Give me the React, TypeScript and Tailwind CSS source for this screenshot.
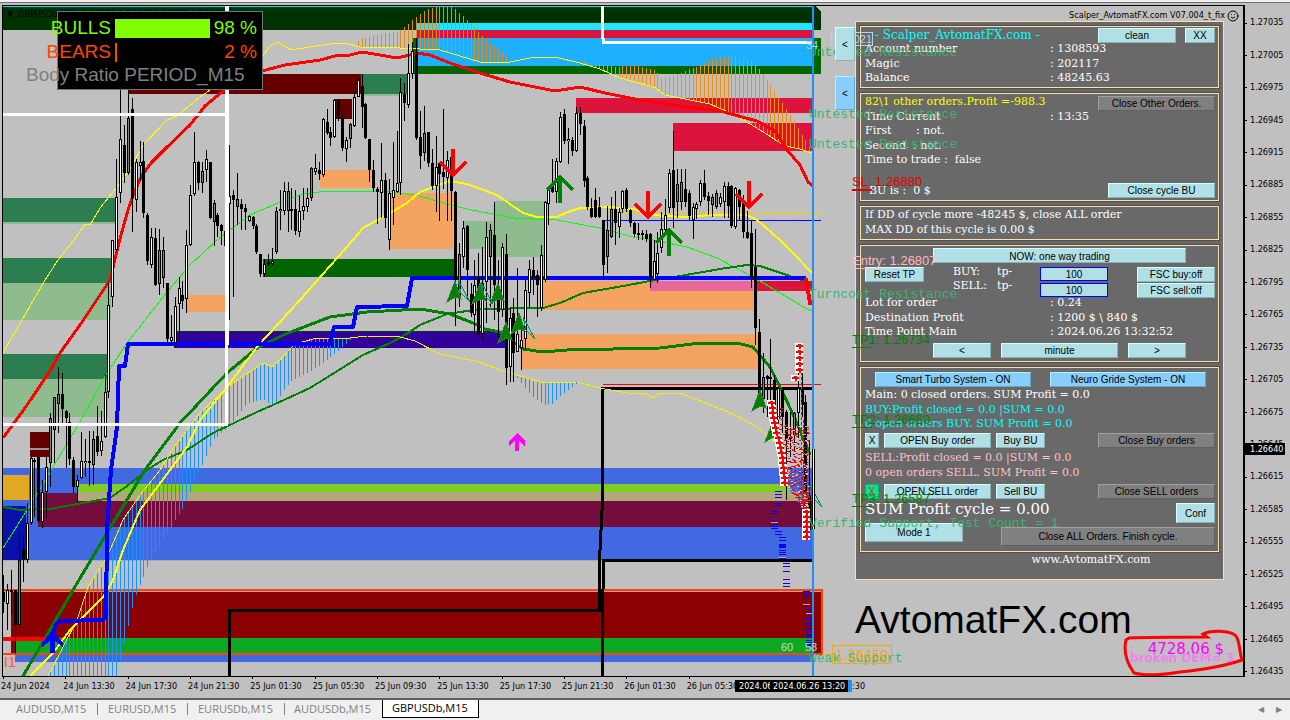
import type { ReactNode } from 'react'
import clsx from 'clsx'
import { Smile } from 'lucide-react'

type Point = [number, number]
type Zone = [x1: number, y1: number, x2: number, y2: number, fill: string]
type Candle = [high: number, low: number, top: number, bottom: number, kind: string]

const PRICES = Array.from({ length: 21 }, (_, i) => (1.27035 - i * 0.0003).toFixed(5))

const TIMES = [
  '24 Jun 2024', '24 Jun 13:30', '24 Jun 17:30', '24 Jun 21:30', '25 Jun 01:30', '25 Jun 05:30',
  '25 Jun 09:30', '25 Jun 13:30', '25 Jun 17:30', '25 Jun 21:30', '26 Jun 01:30', '26 Jun 05:30',
]

const TABS = ['AUDUSD,M15', 'EURUSD,M15', 'EURUSDb,M15', 'AUDUSDb,M15', 'GBPUSDb,M15']

const ZONES: Zone[] = [
  [3, 6, 821, 30, '#003200'],
  [416, 23, 812, 30, '#1ee6ff'],
  [416, 30, 812, 38, '#dc143c'],
  [413, 38, 821, 74, '#006400'],
  [418, 38, 812, 66, '#1eb0ff'],
  [129, 74, 361, 94, '#640000'],
  [361, 74, 407, 96, '#8fbc8f'],
  [361, 74, 407, 94, '#2c7d50'],
  [335, 99, 352, 119, '#640000'],
  [320, 170, 371, 188, '#f4a460'],
  [390, 193, 453, 249, '#f4a460'],
  [187, 295, 229, 312, '#f4a460'],
  [542, 281, 754, 310, '#f4a460'],
  [522, 334, 758, 369, '#f4a460'],
  [3, 198, 116, 224, '#8fbc8f'],
  [3, 198, 116, 222, '#2c7d50'],
  [3, 258, 111, 283, '#2c7d50'],
  [3, 283, 111, 320, '#8fbc8f'],
  [3, 354, 108, 379, '#2c7d50'],
  [3, 379, 108, 417, '#8fbc8f'],
  [263, 259, 455, 277, '#006400'],
  [463, 221, 494, 249, '#8fbc8f'],
  [494, 201, 547, 257, '#8fbc8f'],
  [174, 331, 505, 348, '#32009b'],
  [174, 331, 505, 332, '#004000'],
  [576, 98, 812, 113, '#dc143c'],
  [673, 123, 812, 151, '#dc143c'],
  [650, 281, 753, 291, '#e9679b'],
  [757, 281, 812, 291, '#dc143c'],
  [3, 468, 812, 560, '#4169e1'],
  [78, 484, 790, 492, '#82cd22'],
  [78, 492, 798, 501, '#b3a77f'],
  [38, 501, 812, 527, '#740d3d'],
  [38, 493, 78, 501, '#740d3d'],
  [3, 475, 29, 500, '#e1a823'],
  [3, 506, 26, 560, '#0a10aa'],
  [30, 432, 49, 457, '#640000'],
  [30, 448, 49, 450, '#969696'],
  [11, 592, 821, 654, '#8b0000'],
  [15, 638, 812, 654, '#0ca820'],
  [15, 655, 812, 662, '#4169e1'],
]

const YELLOW_TOP: Point[] = [
  [3, 353], [22, 320], [45, 280], [58, 260], [74, 240], [85, 224], [90, 225], [100, 208], [117, 187],
  [132, 166], [143, 145], [167, 120], [177, 116], [200, 97], [213, 88], [262, 57], [270, 46], [278, 42],
  [291, 50], [310, 47], [330, 44], [345, 43], [360, 47], [400, 48], [440, 50], [450, 53], [480, 62],
  [510, 62], [530, 58], [555, 57], [580, 63], [600, 69], [620, 78], [650, 86], [656, 88], [665, 95],
  [680, 98], [710, 104], [735, 115], [760, 130], [785, 146], [800, 149], [812, 153],
]

const YELLOW_LOW: Point[] = [
  [48, 676], [77, 620], [88, 587], [107, 557], [123, 520], [140, 495], [160, 470], [177, 443], [200, 413],
  [230, 385], [263, 363], [273, 367], [293, 346], [302, 342], [317, 338], [350, 338], [367, 336],
  [400, 337], [415, 341], [440, 354], [480, 362], [500, 370], [527, 378], [543, 383], [577, 382],
  [600, 388], [627, 393], [645, 393], [653, 398], [660, 393], [680, 393], [703, 402], [733, 414],
  [757, 427], [775, 442],
]

const YELLOW_MA: Point[] = [
  [30, 676], [53, 653], [70, 630], [103, 597], [113, 580], [123, 550], [140, 510], [170, 470], [187, 447],
  [200, 420], [227, 387], [257, 347], [300, 300], [353, 240], [363, 228], [390, 213], [407, 203],
  [420, 192], [433, 187], [450, 181], [467, 184], [497, 195], [523, 213], [537, 217], [557, 217],
  [568, 212], [580, 208], [610, 207], [633, 209], [653, 215], [680, 217], [713, 215], [747, 215],
  [757, 220], [780, 240], [793, 253], [812, 273],
]

const LIME_MA: Point[] = [
  [3, 548], [27, 510], [50, 472], [80, 422], [107, 373], [127, 343], [167, 292], [190, 265], [217, 240],
  [250, 215], [280, 202], [303, 194], [327, 191], [387, 191], [420, 196], [433, 200], [467, 209],
  [513, 218], [557, 220], [600, 228], [633, 237], [653, 240], [687, 247], [717, 258], [753, 277],
  [780, 293], [807, 309], [812, 311],
]

const GREEN_MA: Point[] = [
  [23, 676], [73, 590], [113, 523], [145, 470], [180, 423], [227, 373], [257, 348], [283, 335],
  [330, 317], [367, 312], [420, 309], [450, 314], [473, 323], [485, 329], [500, 332], [523, 349],
  [543, 352], [567, 350], [660, 348], [700, 343], [737, 343], [753, 347], [770, 367], [783, 393],
  [797, 423], [810, 455],
]

const GREEN_SLOW: Point[] = [
  [3, 507], [20, 510], [50, 509], [77, 504], [110, 498], [127, 486], [147, 470], [163, 460], [187, 450],
  [213, 433], [257, 412], [273, 405], [310, 388], [363, 355], [390, 343], [405, 335], [420, 325],
  [447, 314], [480, 309], [543, 308], [560, 303], [583, 293], [623, 286], [650, 281], [680, 276],
  [720, 269], [747, 265], [760, 266], [787, 275], [807, 282], [812, 285],
]

const RED_MA: Point[] = [
  [3, 438], [25, 408], [50, 371], [60, 353], [80, 325], [110, 280], [116, 255], [121, 235], [128, 210],
  [134, 193], [142, 175], [152, 162], [165, 149], [190, 125], [205, 106], [222, 92], [262, 71],
  [285, 65], [320, 60], [335, 56], [350, 55], [362, 52], [380, 55], [397, 58], [410, 55], [417, 53],
  [430, 55], [450, 63], [480, 73], [510, 82], [540, 88], [555, 91], [580, 87], [605, 93], [640, 100],
  [680, 106], [720, 111], [757, 121], [775, 131], [787, 150], [800, 165], [808, 182], [813, 186],
]

const BLUE_STEP: Point[] = [
  [53, 640], [55, 625], [59, 621], [103, 620], [106, 616], [107, 530], [111, 470], [117, 427],
  [119, 366], [125, 366], [128, 344], [330, 344], [334, 327], [353, 327], [357, 307], [407, 306],
  [412, 278], [806, 278],
]

// one entry per M15 bar: w = bullish, b = bearish, g = muted
const CANDLES: Candle[] = [
  [575, 613, 592, 602, 'b'], [584, 630, 590, 604, 'w'], [570, 615, 590, 592, 'b'], [590, 654, 590, 625, 'b'],
  [535, 632, 560, 625, 'g'], [537, 582, 550, 559, 'b'], [503, 563, 523, 560, 'w'], [457, 525, 458, 523, 'w'],
  [458, 517, 460, 462, 'b'], [457, 523, 457, 521, 'b'], [480, 528, 492, 522, 'w'], [457, 518, 467, 492, 'w'],
  [413, 487, 418, 463, 'g'], [397, 463, 397, 430, 'g'], [367, 433, 394, 404, 'g'], [373, 423, 394, 409, 'b'],
  [410, 468, 411, 418, 'b'], [413, 465, 422, 459, 'b'], [457, 493, 460, 487, 'b'], [475, 502, 480, 487, 'w'],
  [432, 479, 461, 478, 'w'], [439, 477, 461, 463, 'w'], [431, 486, 461, 463, 'b'], [431, 485, 439, 465, 'g'],
  [406, 456, 436, 452, 'b'], [411, 456, 441, 451, 'w'], [374, 438, 392, 437, 'w'], [283, 398, 305, 392, 'w'],
  [240, 307, 240, 297, 'w'], [159, 251, 197, 250, 'w'], [90, 203, 139, 193, 'w'], [125, 183, 145, 173, 'b'],
  [90, 175, 118, 173, 'g'], [98, 232, 109, 198, 'b'], [159, 212, 162, 200, 'w'], [141, 180, 162, 166, 'w'],
  [142, 218, 161, 213, 'b'], [213, 265, 215, 261, 'b'], [228, 268, 237, 265, 'w'], [228, 286, 238, 285, 'b'],
  [229, 295, 250, 284, 'g'], [237, 288, 250, 278, 'g'], [283, 346, 283, 339, 'b'], [315, 345, 337, 341, 'w'],
  [297, 348, 306, 343, 'w'], [277, 340, 288, 304, 'w'], [281, 309, 295, 301, 'b'], [230, 313, 245, 299, 'w'],
  [185, 246, 195, 245, 'w'], [132, 196, 162, 194, 'w'], [161, 190, 162, 183, 'b'], [162, 193, 171, 183, 'g'],
  [150, 182, 159, 170, 'w'], [162, 219, 162, 218, 'b'], [200, 246, 203, 222, 'g'], [213, 237, 215, 226, 'b'],
  [224, 245, 225, 231, 'b'], [222, 247, 231, 246, 'b'], [145, 320, 196, 204, 'w'], [190, 297, 195, 200, 'b'],
  [173, 225, 199, 207, 'g'], [199, 230, 204, 209, 'b'], [204, 230, 208, 212, 'b'], [215, 222, 216, 221, 'w'],
  [216, 229, 217, 226, 'b'], [224, 254, 226, 252, 'b'], [254, 277, 254, 274, 'b'], [259, 277, 264, 274, 'w'],
  [254, 266, 262, 265, 'b'], [248, 265, 261, 264, 'w'], [207, 254, 211, 252, 'g'], [190, 230, 209, 211, 'g'],
  [182, 215, 191, 211, 'w'], [182, 232, 191, 211, 'g'], [188, 230, 209, 211, 'b'], [190, 235, 209, 231, 'b'],
  [195, 237, 211, 232, 'w'], [188, 220, 206, 211, 'w'], [188, 212, 198, 207, 'w'], [167, 201, 168, 198, 'g'],
  [154, 175, 168, 172, 'w'], [162, 180, 170, 174, 'b'], [118, 177, 119, 175, 'w'], [109, 135, 122, 133, 'b'],
  [127, 146, 132, 138, 'b'], [99, 138, 100, 137, 'w'], [99, 121, 100, 115, 'b'], [114, 151, 118, 148, 'b'],
  [137, 162, 140, 149, 'w'], [123, 148, 124, 139, 'g'], [92, 127, 97, 126, 'w'], [78, 97, 80, 97, 'w'],
  [74, 128, 86, 107, 'b'], [103, 139, 104, 138, 'b'], [139, 182, 139, 170, 'b'], [160, 192, 170, 188, 'b'],
  [187, 224, 189, 192, 'b'], [143, 218, 180, 193, 'w'], [173, 228, 180, 218, 'b'], [179, 250, 193, 240, 'w'],
  [142, 225, 190, 198, 'w'], [131, 193, 183, 192, 'w'], [78, 195, 92, 183, 'w'], [83, 121, 94, 103, 'b'],
  [44, 108, 73, 105, 'w'], [42, 79, 51, 74, 'w'], [38, 140, 52, 138, 'b'], [111, 169, 137, 156, 'b'],
  [106, 161, 133, 153, 'g'], [132, 167, 132, 163, 'b'], [149, 190, 163, 186, 'b'], [136, 212, 167, 186, 'w'],
  [162, 221, 163, 174, 'b'], [109, 189, 172, 177, 'b'], [151, 221, 160, 178, 'w'], [149, 221, 157, 191, 'b'],
  [191, 326, 192, 280, 'b'], [243, 307, 254, 296, 'g'], [221, 268, 228, 257, 'w'], [225, 300, 226, 270, 'b'],
  [283, 317, 294, 313, 'b'], [260, 333, 285, 315, 'w'], [253, 335, 278, 334, 'b'], [247, 339, 283, 334, 'w'],
  [222, 323, 237, 282, 'w'], [224, 307, 230, 257, 'g'], [202, 320, 235, 285, 'b'], [260, 337, 293, 312, 'b'],
  [243, 317, 247, 310, 'w'], [234, 385, 254, 368, 'b'], [307, 382, 318, 367, 'w'], [298, 382, 313, 353, 'b'],
  [268, 350, 334, 352, 'w'], [323, 370, 340, 348, 'w'], [277, 350, 290, 339, 'w'], [260, 307, 269, 293, 'w'],
  [257, 295, 270, 278, 'b'], [270, 317, 275, 285, 'b'], [245, 311, 255, 308, 'w'], [201, 282, 202, 280, 'w'],
  [188, 225, 188, 204, 'w'], [159, 193, 186, 192, 'b'], [158, 203, 161, 192, 'w'], [112, 163, 117, 162, 'w'],
  [109, 144, 114, 141, 'b'], [128, 164, 139, 141, 'w'], [137, 156, 140, 151, 'b'], [107, 152, 113, 151, 'w'],
  [107, 135, 113, 124, 'b'], [120, 187, 126, 181, 'b'], [176, 210, 178, 207, 'b'], [198, 218, 208, 217, 'b'],
  [188, 218, 200, 217, 'b'], [197, 218, 207, 217, 'b'], [220, 277, 220, 265, 'b'], [206, 273, 230, 257, 'g'],
  [197, 238, 209, 237, 'g'], [191, 245, 209, 223, 'b'], [208, 238, 212, 227, 'w'], [190, 213, 191, 209, 'w'],
  [188, 212, 190, 209, 'b'], [209, 227, 210, 223, 'b'], [222, 237, 223, 234, 'b'], [223, 240, 233, 235, 'b'],
  [230, 240, 233, 235, 'b'], [230, 242, 234, 239, 'b'], [233, 288, 234, 278, 'b'], [240, 280, 261, 280, 'w'],
  [232, 283, 253, 274, 'w'], [212, 253, 229, 248, 'w'], [199, 235, 215, 230, 'w'], [169, 213, 173, 208, 'w'],
  [131, 228, 170, 208, 'b'], [169, 218, 184, 202, 'g'], [169, 210, 182, 202, 'g'], [169, 207, 189, 202, 'b'],
  [190, 220, 193, 216, 'b'], [203, 239, 207, 220, 'w'], [202, 219, 204, 209, 'w'], [180, 206, 183, 202, 'w'],
  [170, 200, 183, 197, 'b'], [192, 215, 196, 201, 'b'], [194, 217, 197, 205, 'g'], [190, 209, 193, 207, 'g'],
  [193, 207, 197, 204, 'w'], [182, 218, 186, 202, 'w'], [182, 218, 186, 206, 'b'], [185, 228, 186, 226, 'b'],
  [187, 229, 188, 227, 'w'], [189, 220, 190, 207, 'b'], [195, 238, 200, 232, 'b'], [211, 239, 232, 238, 'b'],
  [220, 288, 233, 278, 'b'], [229, 345, 267, 328, 'b'], [319, 402, 332, 402, 'b'], [353, 413, 377, 399, 'g'],
  [375, 417, 376, 379, 'b'], [339, 410, 377, 379, 'b'], [375, 430, 380, 418, 'b'], [387, 423, 388, 420, 'w'],
  [387, 433, 390, 417, 'b'], [410, 500, 412, 440, 'b'], [412, 457, 437, 439, 'b'], [412, 452, 413, 435, 'g'],
  [350, 438, 388, 413, 'w'], [345, 417, 388, 405, 'b'], [395, 495, 402, 495, 'b'], [440, 540, 495, 530, 'b'],
  [448, 530, 449, 529, 'w'],
]

const CANDLE_FILL: Record<string, string> = { w: '#ffffff', b: '#000000', g: '#808080' }

const ORANGE_A: Point[] = [
  [357, 41], [372, 36], [383, 33], [398, 32], [410, 22], [425, 10], [440, 6], [453, 7], [467, 20],
  [483, 37], [498, 49], [511, 62],
]
const ORANGE_B: Point[] = [
  [583, 62], [600, 64], [615, 67], [635, 65], [655, 70], [661, 78], [680, 73], [700, 65], [715, 58],
  [735, 56], [752, 60], [765, 77], [780, 100], [795, 123], [805, 140], [812, 152],
]
const BLUE_A: Point[] = [
  [50, 676], [116, 676], [125, 640], [133, 603], [147, 567], [167, 533], [183, 507], [200, 470],
  [213, 440], [227, 428], [247, 403], [263, 399], [273, 406], [290, 382], [307, 373], [320, 365],
  [333, 355], [350, 340],
]
const BLUE_B: Point[] = [[517, 378], [530, 394], [543, 405], [552, 404], [562, 394], [577, 383]]

const barX = (i: number) => Math.round(3.3 + i * 3.894)

const yAt = (pts: Point[], x: number) => {
  const i = pts.findIndex(p => p[0] >= x)
  if (i <= 0) return pts[Math.max(i, 0)][1]
  const [x0, y0] = pts[i - 1]
  const [x1, y1] = pts[i]
  return y0 + ((y1 - y0) * (x - x0)) / (x1 - x0)
}

const toPoints = (pts: Point[]) => pts.map(p => p.join(',')).join(' ')

function Curve({ pts, color, width = 1 }: { pts: Point[]; color: string; width?: number }) {
  return <polyline points={toPoints(pts)} fill="none" stroke={color} strokeWidth={width} strokeLinejoin="round" />
}

function Histogram({ edge, base, color }: { edge: Point[]; base: Point[]; color: string }) {
  const from = edge[0][0]
  const to = edge[edge.length - 1][0]
  const xs = CANDLES.map((_, i) => barX(i)).filter(x => x >= from && x <= to)
  return (
    <g stroke={color}>
      {xs.map(x => (
        <line key={x} x1={x + 0.5} x2={x + 0.5} y1={yAt(edge, x)} y2={yAt(base, x)} />
      ))}
    </g>
  )
}

function ChevronArrow({ x, y, up, color }: { x: number; y: number; up?: boolean; color: string }) {
  const d = up ? 'M0 0V27M-13 14L0 1L13 14' : 'M0 0V27M-13 13L0 26L13 13'
  return <path d={d} transform={`translate(${x} ${y})`} stroke={color} strokeWidth="4" fill="none" />
}

function Kite({ x, y, flip }: { x: number; y: number; flip?: boolean }) {
  return (
    <path
      d={flip ? 'M-4 -12L8 10L-1 1Z' : 'M0 -12L-8 9L0 4L6 6Z'}
      transform={`translate(${x} ${y})`}
      fill={flip ? 'none' : '#008000'}
      stroke={flip ? '#008b6b' : '#2e7d32'}
    />
  )
}

// left border of the trade cluster, as [y, x]
const CLUSTER_EDGE: Point[] = [[400, 771], [420, 773], [440, 778], [460, 782], [484, 784], [500, 798], [515, 803]]

// deterministic speckle inside the trade cluster
function TradeCluster() {
  let seed = 7
  const rnd = () => {
    seed = (seed * 16807) % 2147483647
    return seed / 2147483647
  }
  const dots = Array.from({ length: 620 }, () => {
    const y = 408 + rnd() * 104
    const x0 = yAt(CLUSTER_EDGE, y)
    const shade = rnd()
    const x = x0 + rnd() * (808 - x0)
    const fill = shade > 0.96 ? '#0000ff' : shade > 0.88 ? '#82cd22' : shade > 0.68 ? '#c8c8c8' : '#ff0000'
    return { x, y, fill, show: x < x0 + 9 || y > 425 }
  })
  const tips: Point[] = []
  for (let y = 346; y < 376; y += 6) tips.push([799, y])
  tips.push([795, 378])
  for (let y = 403; y < 485; y += 5) tips.push([Math.round(yAt(CLUSTER_EDGE, y)), y])
  for (let y = 512; y < 538; y += 5) tips.push([806, y])
  return (
    <g>
      {dots.filter(d => d.show).map((d, i) => (
        <rect key={i} x={Math.round(d.x)} y={Math.round(d.y)} width="2" height="1" fill={d.fill} />
      ))}
      <path d="M801.5 352V500M803.5 420V520" stroke="#ff0000" strokeDasharray="3 2" fill="none" />
      {tips.map(([x, y]) => (
        <rect key={`b${x}-${y}`} x={x - 4} y={y - 3} width="8" height="6" fill="#ffffff" />
      ))}
      {tips.map(([x, y]) => (
        <path key={`t${x}-${y}`} d={`M${x - 3} ${y - 1}h2v-1h3v1h2v2h-2v2h-2v-2h-3z`} fill="#ff0000" />
      ))}
    </g>
  )
}

const BLUE_DASHES: [number, number[]][] = [
  [775, [491, 494, 497, 503, 505]],
  [771, [511, 513, 521, 524, 526, 528]],
  [775, [531, 534]],
  [779, [537, 540, 544, 545, 546, 547, 550, 552, 554, 558]],
  [783, [563, 566, 571, 579, 583, 586]],
  [803, [591, 593, 595, 597, 605]],
  [806, [609, 612, 618, 619, 623, 625, 628, 631, 634, 635, 637, 640, 642, 644, 645]],
]

function PriceChart() {
  return (
    <svg viewBox="3 6 1241 670" preserveAspectRatio="xMinYMin slice" className="block w-full h-[670px]" shapeRendering="crispEdges">
      {ZONES.map(([x1, y1, x2, y2, fill], i) => (
        <rect key={i} x={x1} y={y1} width={x2 - x1} height={y2 - y1} fill={fill} />
      ))}
      <path d="M815 6l6 6v-6z" fill="#c0c0c0" />
      <path d="M3 6.5H813" stroke="#00e5ff" />
      <path d="M3 590H822V654H3" stroke="#ff4500" strokeWidth="2" fill="none" />
      <path d="M3 591.5H821M3 560.5H812" stroke="#b0a8a8" />

      <Histogram edge={ORANGE_A} base={YELLOW_TOP} color="#e08c18" />
      <Histogram edge={ORANGE_B} base={YELLOW_TOP} color="#f09018" />
      <Histogram edge={BLUE_A} base={YELLOW_LOW} color="#1e90ff" />
      <Histogram edge={BLUE_B} base={YELLOW_LOW} color="#1e90ff" />

      <path d="M603 212.5H821" stroke="#ffc800" />
      <path d="M603 220.5H821" stroke="#0000ff" />
      <path d="M603 384.5H821" stroke="#ff0000" />
      <path d="M229.5 676V610.5H599.5V560L602.5 500V388.5H814M602.5 676V620L603.5 560H814" stroke="#000" strokeWidth="3" fill="none" />

      <Curve pts={LIME_MA} color="#00ff00" />
      <Curve pts={GREEN_SLOW} color="#008000" width={2} />
      <Curve pts={GREEN_MA} color="#008000" width={3} />
      <Curve pts={YELLOW_TOP} color="#ffff00" />
      <Curve pts={YELLOW_LOW} color="#f5f000" />
      <Curve pts={YELLOW_MA} color="#ffff00" width={2} />
      <Curve pts={RED_MA} color="#ff0000" width={3} />
      <path d="M3 639H48" stroke="#ff0000" strokeWidth="4" />
      <Curve pts={BLUE_STEP} color="#0000ff" width={4} />
      <path d="M806 278L810 303H814" stroke="#ff0000" strokeWidth="4" fill="none" />

      <g>
        {CANDLES.map(([high, low, top, bottom, kind], i) => {
          const x = barX(i)
          return (
            <g key={i}>
              <rect x={x} y={high} width="1" height={low - high} />
              <rect x={x - 1} y={top} width="3" height={Math.max(bottom - top, 2)} />
              {kind !== 'b' && <rect x={x} y={top + 1} width="1" height={Math.max(bottom - top - 2, 1)} fill={CANDLE_FILL[kind]} />}
            </g>
          )
        })}
      </g>

      <path d="M3 114.5H227M226 345V424.5H3M602 6V30L603.5 42.5H812" stroke="#fff" strokeWidth="3" fill="none" />
      <path d="M227 6V345" stroke="#fff" strokeWidth="4" />

      <Kite x={455} y={293} />
      <Kite x={480} y={295} />
      <Kite x={498} y={295} />
      <Kite x={506} y={334} />
      <Kite x={519} y={325} />
      <Kite x={527} y={329} flip />
      <Kite x={462} y={292} flip />
      <Kite x={485} y={294} flip />
      <Kite x={760} y={402} />
      <Kite x={773} y={433} />
      <Kite x={814} y={497} flip />
      <TradeCluster />
      {BLUE_DASHES.map(([x, ys]) => ys.map(y => <rect key={`${x}-${y}`} x={x} y={y} width="7" height="1" fill="#0000ff" />))}
      <path d="M771 522.5h7M779 557.5h7M783 569.5h7M783 576.5h7M803 604.5h7M806 613.5h7" stroke="#f4a460" />
      <path d="M813 6V676" stroke="#1e90ff" strokeWidth="2" />
      <path d="M812.5 449V529M814.5 449V529" stroke="#000" />
      <path d="M813.5 449V529" stroke="#fff" />

      <ChevronArrow x={453} y={149} color="#ff0000" />
      <ChevronArrow x={648} y={191} color="#ff0000" />
      <ChevronArrow x={749} y={181} color="#ff0000" />
      <ChevronArrow x={560} y={176} up color="#008000" />
      <ChevronArrow x={669} y={229} up color="#008000" />
      <path d="M517 433l8 8v5l-6 -5v10h-4v-10l-6 5v-5z" fill="#ff00ff" />
      <path d="M52 630l11 13v4l-8 -6v12h-5v-12l-8 6v-4z" fill="#0000ff" />

      <path
        d="M1129 638C1150 637 1185 637 1207 637L1203 634C1210 630 1230 630 1236 636C1240 642 1239 650 1242 660C1225 666 1200 670 1180 672C1165 675 1145 676 1134 673C1127 663 1123 652 1126 640Z"
        stroke="#ff0000"
        strokeWidth="3"
        fill="none"
        shapeRendering="auto"
      />
    </svg>
  )
}

function RatioMeter() {
  return (
    <div className="absolute left-[23px] top-[5px] w-[237px] h-[79px] font-['Liberation_Sans'] text-[19px]">
      <div className="absolute inset-y-0 right-0 w-[206px] border border-[#777] bg-black" />
      <div className="relative flex h-full flex-col pt-[5px] leading-[24px]">
        <div className="flex items-center text-[#7cfc00]">
          <span className="w-[85px] text-right">BULLS</span>
          <span className="ml-1 h-[19px] w-[95px] bg-[#7fff00]" />
          <span className="flex-1 whitespace-nowrap pr-[6px] text-right">98 %</span>
        </div>
        <div className="flex items-center text-[#ff4500]">
          <span className="w-[85px] text-right">BEARS</span>
          <span className="ml-1 h-[19px] w-[2px] bg-[#ff4500]" />
          <span className="flex-1 whitespace-nowrap pr-[6px] text-right">2 %</span>
        </div>
        <div className="whitespace-nowrap leading-[22px] text-[#808080]">Body Ratio PERIOD_M15</div>
      </div>
    </div>
  )
}

type ButtonProps = { children: ReactNode; className?: string; tone?: 'cyan' | 'blue' | 'gray' | 'green' }

function PanelButton({ children, className, tone = 'cyan' }: ButtonProps) {
  return (
    <button
      type="button"
      className={clsx(
        "flex shrink-0 items-center justify-center overflow-hidden whitespace-nowrap border font-['Liberation_Sans'] leading-[13px]",
        tone === 'cyan' && 'border-t-[#d8ffff] border-l-[#d8ffff] border-r-[#88b4b8] border-b-[#88b4b8] bg-[#b0e0e6] text-black',
        tone === 'blue' && 'border-t-[#b0f0ff] border-l-[#b0f0ff] border-r-[#6ba4c8] border-b-[#6ba4c8] bg-[#87cefa] text-black',
        tone === 'gray' && 'border-t-[#a0a0a0] border-l-[#a0a0a0] border-r-[#606060] border-b-[#606060] bg-[#808080] text-black',
        tone === 'green' && 'border-[#00c070] bg-[#00e58a] text-[#ff2020]',
        className,
      )}
    >
      {children}
    </button>
  )
}

function Box({ children, className }: { children: ReactNode; className?: string }) {
  return <section className={clsx('border border-[#ffdead] pl-1 pr-[3px] outline outline-[#505050]', className)}>{children}</section>
}

function Row({ label, value, className = 'h-[15px]' }: { label: string; value?: string; className?: string }) {
  return (
    <div className={clsx('flex items-center whitespace-pre', className)}>
      <span className={value ? 'w-[185px]' : ''}>{label}</span>
      {value && <span>{value}</span>}
    </div>
  )
}

function ScalperPanel() {
  return (
    <aside className="absolute right-[19px] top-[15px] w-[369px] border border-[#ffdead] bg-[#696969] px-1 pb-[6px] pt-1 font-['DejaVu_Serif'] text-[11px] leading-[15px] text-white">
      <Box className="pb-[2px]">
        <div className="flex h-4 items-center gap-[9px]">
          <h2 className="flex-1 whitespace-nowrap pl-[10px] text-[12px] text-[#00ffff]">- Scalper_AvtomatFX.com -</h2>
          <PanelButton className="h-[15px] w-[78px] text-[10px]">clean</PanelButton>
          <PanelButton className="h-[15px] w-[30px] text-[10px]">XX</PanelButton>
        </div>
        <Row label="Account number" value=": 1308593" className="-mt-[2px] h-[15px]" />
        <Row label="Magic" value=": 202117" className="h-[14px]" />
        <Row label="Balance" value=": 48245.63" />
      </Box>

      <Box className="mt-[5px] pb-[2px]">
        <div className="flex h-[15px] items-center justify-between">
          <span className="whitespace-nowrap text-[#ffff00]">82\1 other orders.Profit =-988.3</span>
          <PanelButton tone="gray" className="mt-[3px] h-[15px] w-[117px] text-[10px]">Close Other Orders.</PanelButton>
        </div>
        <Row label="Time Current" value=": 13:35" className="h-[14px]" />
        <Row label="First       : not." />
        <Row label="Second  : not." className="h-[14px]" />
        <Row label="Time to trade :  false" />
        <div className="mt-4 flex h-[15px] items-center justify-between pl-1">
          <span className="whitespace-pre">BU is :  0 $</span>
          <PanelButton className="h-[15px] w-[107px] text-[10px]">Close cycle BU</PanelButton>
        </div>
      </Box>

      <Box className="mt-[5px] pb-[3px]">
        <Row label="If DD of cycle more -48245 $, close ALL order" />
        <Row label="MAX DD of this cycle is 0.00 $" className="h-[14px]" />
      </Box>

      <Box className="mt-[5px] pb-[3px] pt-[2px]">
        <PanelButton className="ml-[68px] h-[15px] w-[253px] pt-[2px] text-[10px]">NOW: one way trading</PanelButton>
        <div className="mt-1 flex h-[31px]">
          <PanelButton className="h-[15px] w-[59px] text-[10px]">Reset TP</PanelButton>
          <div className="ml-[29px] leading-[14px]">
            <label htmlFor="buy-tp" className="flex -mt-[2px]"><span className="w-11">BUY:</span><span>tp-</span></label>
            <label htmlFor="sell-tp" className="flex"><span className="w-11">SELL:</span><span>tp-</span></label>
          </div>
          <div className="ml-auto flex flex-col gap-[2px]">
            <input id="buy-tp" defaultValue="100" className="h-[14px] w-[68px] border border-[#0000ff] bg-[#b0e0e6] text-center font-['Liberation_Sans'] text-[10px] text-black" />
            <input id="sell-tp" defaultValue="100" className="h-[14px] w-[68px] border border-[#0000ff] bg-[#b0e0e6] text-center font-['Liberation_Sans'] text-[10px] text-black" />
          </div>
          <div className="ml-[29px] flex flex-col gap-px">
            <PanelButton className="h-[15px] w-[78px] text-[10px]">FSC buy:off</PanelButton>
            <PanelButton className="h-[15px] w-[78px] text-[10px]">FSC sell:off</PanelButton>
          </div>
        </div>
        <Row label="Lot for order" value=": 0.24" className="-mt-[3px] h-[15px]" />
        <Row label="Destination Profit" value=": 1200 $ \ 840 $" className="h-[14px]" />
        <Row label="Time Point Main" value=": 2024.06.26 13:32:52" />
        <div className="ml-[68px] mt-1 flex gap-[10px]">
          <PanelButton className="h-[15px] w-[58px] text-[10px]">&lt;</PanelButton>
          <PanelButton className="h-[15px] w-[117px] text-[10px]">minute</PanelButton>
          <PanelButton className="h-[15px] w-[58px] text-[10px]">&gt;</PanelButton>
        </div>
      </Box>

      <Box className="mt-[5px] pb-[5px] pt-1">
        <div className="flex justify-between pl-[10px] pr-[9px]">
          <PanelButton tone="blue" className="h-[15px] w-[156px] text-[10px]">Smart Turbo System - ON</PanelButton>
          <PanelButton tone="blue" className="h-[15px] w-[156px] text-[10px]">Neuro Gride System - ON</PanelButton>
        </div>
        <Row label="Main: 0 closed orders. SUM Profit = 0.0" />
        <Row label="BUY:Profit closed = 0.0 |SUM = 0.0" className="h-[14px] text-[#00ffff]" />
        <Row label="0 open orders BUY. SUM Profit = 0.0" className="h-[15px] text-[#00ffff]" />
        <div className="mt-[2px] flex gap-[5px]">
          <PanelButton className="h-[15px] w-[14px] text-[10px]">X</PanelButton>
          <PanelButton className="h-[15px] w-[107px] text-[10px]">OPEN Buy order</PanelButton>
          <PanelButton className="h-[15px] w-[49px] text-[10px]">Buy BU</PanelButton>
          <PanelButton tone="gray" className="ml-auto h-[15px] w-[117px] text-[10px]">Close Buy orders</PanelButton>
        </div>
        <Row label="SELL:Profit closed = 0.0 |SUM = 0.0" className="mt-[2px] h-[15px] text-[#ffc0cb]" />
        <Row label="0 open orders SELL. SUM Profit = 0.0" className="h-[15px] text-[#ffc0cb]" />
        <div className="mt-1 flex gap-[5px]">
          <PanelButton tone="green" className="h-[15px] w-[14px] text-[10px]">X</PanelButton>
          <PanelButton className="h-[15px] w-[107px] text-[10px]">OPEN SELL order</PanelButton>
          <PanelButton className="h-[15px] w-[49px] text-[10px]">Sell BU</PanelButton>
          <PanelButton tone="gray" className="ml-auto h-[15px] w-[117px] text-[10px]">Close SELL orders</PanelButton>
        </div>
        <div className="flex justify-between">
          <span className="text-[15px] leading-[20px]">SUM Profit cycle = 0.00</span>
          <PanelButton className="mt-1 h-5 w-[39px] text-[10px]">Conf</PanelButton>
        </div>
        <div className="flex justify-between">
          <PanelButton className="h-[19px] w-[98px] text-[10px]">Mode 1</PanelButton>
          <PanelButton tone="gray" className="mt-1 h-[19px] w-[214px] text-[10px]">Close ALL Orders. Finish cycle.</PanelButton>
        </div>
      </Box>
      <p className="pb-[6px] pl-[103px] text-center">www.AvtomatFX.com</p>
    </aside>
  )
}

// free-floating chart objects pinned at their price levels
function Annotations() {
  const mono = "absolute left-[806px] whitespace-nowrap font-['Liberation_Mono'] text-[13px] leading-[14px] text-[#3cb371]"
  const level = "absolute left-[849px] whitespace-nowrap font-['Liberation_Sans'] text-[13px] leading-[14px]"
  return (
    <div className="pointer-events-none absolute inset-0">
      <span className={clsx(mono, 'top-[40px]')}>Untested Resistance</span>
      <span className={clsx(mono, 'top-[102px]')}>Untested Resistance</span>
      <span className={clsx(mono, 'top-[132px]')}>Untested Resistance</span>
      <span className={clsx(mono, 'top-[282px]')}>Turncoat Resistance</span>
      <span className={clsx(mono, 'top-[511px]')}>Verified Support, Test Count = 1</span>
      <span className={clsx(mono, 'top-[646px]')}>Weak Support</span>
      <span className={clsx(level, 'top-[169px] text-[#e00000]')}>SL: 1.26880<i className="block h-[2px] w-5 bg-[#e00000]" /></span>
      <span className={clsx(level, 'top-[248px] text-[#ffb6c1]')}>Entry: 1.26807<i className="block h-px w-5 bg-[#ffb6c1]" /></span>
      <span className={clsx(level, 'top-[327px] text-[#008000]')}>TP1: 1.26734<i className="block h-px w-5 bg-[#008000]" /></span>
      <span className={clsx(level, 'top-[407px] text-[#008000]')}>TP2: 1.26660<i className="block h-px w-5 bg-[#008000]" /></span>
      <span className={clsx(level, 'top-[486px] text-[#008000]')}>TP3: 1.26587<i className="block h-px w-5 bg-[#008000]" /></span>
      <span className="absolute left-[828px] top-[26px] h-[14px] w-[42px] border border-[#add8e6] text-right font-['Liberation_Sans'] text-[11px] leading-[12px] text-[#add8e6]">1.27021</span>
      <span className="absolute left-[829px] top-[639px] h-[19px] w-[60px] border border-[#ffa500] text-center font-['DejaVu_Sans_Condensed'] text-[14px] leading-[18px] text-[#ffa500]">1.26450</span>
      <span className="absolute left-[819px] top-[648px] h-px w-[10px] bg-[#ffa500]" />
      <span className="absolute left-[803px] top-[31px] font-['Liberation_Sans'] text-[11px] text-[#a0d8f0]">34</span>
      <span className="absolute left-[778px] top-[633px] font-['Liberation_Sans'] text-[11px] text-[#b0e0e6]">60</span>
      <span className="absolute left-[802px] top-[633px] font-['Liberation_Sans'] text-[11px] text-[#b0e0e6]">58</span>
      <span className="absolute left-px top-[647px] font-['Liberation_Sans'] text-[14px] leading-[18px] text-[#ff5a28]">I1</span>
      <span className="absolute left-[852px] top-[590px] font-['Liberation_Sans'] text-[39px] leading-[48px] text-black">AvtomatFX.com</span>
      <span className="absolute right-[19px] top-[634px] font-['DejaVu_Sans'] text-[15px] leading-[18px] text-[#ff00ff]">4728.06 $</span>
      <span className="absolute right-[9px] top-[645px] whitespace-nowrap font-['DejaVu_Sans'] text-[12px] font-bold leading-[14px] text-[#ee82ee]">broken DEM= 3</span>
    </div>
  )
}

export default function App() {
  return (
    <div className="flex min-h-screen flex-col overflow-hidden bg-[#c0c0c0] font-['DejaVu_Sans_Condensed'] text-[9px]">
      <div className="flex h-[5px] flex-col">
        <div className="h-[2px] bg-[#f0f0f0]" />
        <div className="h-px bg-[#707070]" />
      </div>

      <main className="ml-[2px] mr-[2px] flex">
        <div className="relative min-w-0 flex-1 border border-black border-r-2">
          <span className="absolute left-[4px] top-[2px] whitespace-pre">▼  GBPUSDb,M15  1.26555 1.26642 1.26555 1.26640</span>
          <PriceChart />
          <RatioMeter />
          <header className="absolute right-1 top-[3px] flex items-center gap-[2px] text-[9px]">
            Scalper_AvtomatFX.com V07.004_t_fix
            <Smile size={12} strokeWidth={2} />
          </header>
          <div className="absolute right-[388px] top-[21px] z-10 flex flex-col gap-[15px]">
            <PanelButton className="h-[34px] w-[20px] text-[10px]">&lt;</PanelButton>
            <PanelButton tone="blue" className="h-[34px] w-[20px] text-[10px]">&lt;</PanelButton>
          </div>
          <ScalperPanel />
          <Annotations />
        </div>
        <div className="relative -mb-[2px] flex w-[43px] flex-col justify-between pt-[11px]">
          {PRICES.map(price => (
            <div key={price} className="flex h-[14px] items-center">
              <i className="mr-[3px] h-px w-[2px] bg-black" />
              {price}
            </div>
          ))}
          <div className="absolute left-0 top-[438px] h-[12px] w-10 bg-black pl-[5px] leading-[12px] text-white">1.26640</div>
        </div>
      </main>

      <div className="flex h-[21px] whitespace-nowrap pl-px">
        <div className="w-[734px] shrink-0 overflow-hidden">
          <div className="grid w-[748px] grid-cols-12">
            {TIMES.map(time => (
              <div key={time} className="leading-[14px]">
                <i className="ml-[2px] block h-[2px] w-px bg-black" />
                {time}
              </div>
            ))}
          </div>
        </div>
        <div className="mt-[3px] flex h-[12px] leading-[12px] text-white">
          <span className="w-[35px] overflow-hidden bg-black pl-1">2024.06</span>
          <span className="w-[78px] bg-black pl-[3px]">2024.06.26 13:20</span>
          <span className="w-1 bg-[#1e90ff]" />
          <span className="text-black">:30</span>
        </div>
      </div>

      <nav className="flex flex-1 items-start border-t-2 border-[#606060] bg-[#f0f0f0] font-['Open_Sans'] text-[11px] text-[#808080]">
        {TABS.map((tab, i) => (
          <a
            key={tab}
            href="#"
            className={clsx(
              'flex h-[18px] items-center justify-between whitespace-nowrap',
              i === 0 && 'w-[98px] pl-4',
              i === 1 && 'w-[90px] pl-[10px]',
              i === 2 && 'w-[97px] pl-[10px]',
              i === 3 && 'w-[97px] pl-[9px]',
              i === 4 && 'w-[97px] border border-t-0 border-black bg-white pl-[9px] text-black',
            )}
          >
            {tab}
            {i < 3 && <i className="h-3 w-px bg-[#808080]" />}
          </a>
        ))}
        <div className="ml-auto flex h-[18px] items-center gap-3 pr-2 text-[8px]">
          <button type="button" aria-label="Scroll tabs left">◀</button>
          <button type="button" aria-label="Scroll tabs right">▶</button>
        </div>
      </nav>
    </div>
  )
}
